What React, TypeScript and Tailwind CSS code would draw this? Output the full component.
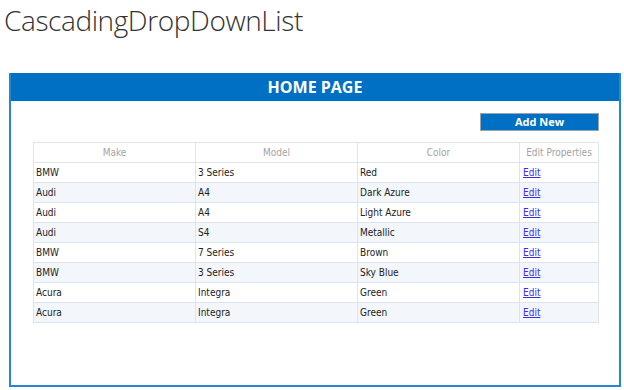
import React from "react";

const rows: [string, string, string][] = [
  ["BMW", "3 Series", "Red"],
  ["Audi", "A4", "Dark Azure"],
  ["Audi", "A4", "Light Azure"],
  ["Audi", "S4", "Metallic"],
  ["BMW", "7 Series", "Brown"],
  ["BMW", "3 Series", "Sky Blue"],
  ["Acura", "Integra", "Green"],
  ["Acura", "Integra", "Green"],
];

export default function App() {
  const cellFont = { fontFamily: '"DejaVu Sans Condensed", "Liberation Sans", sans-serif' };
  return (
    <div className="w-[624px] h-[390px] bg-white overflow-hidden relative">
      <div
        className="pl-[4px] pt-[2px] h-[73px] text-[28px] leading-[36px] tracking-[-0.4px] font-light text-[#333333]"
        style={{ fontFamily: '"Open Sans", "Noto Sans", sans-serif' }}
      >
        CascadingDropDownList
      </div>
      <div className="ml-[9px] w-[612px] h-[314px] border-2 border-[#2a84d4] border-t-0 flex flex-col">
        <div
          className="h-[28px] bg-[#0070c4] text-white font-bold text-[16px] flex items-center justify-center"
          style={{ fontFamily: '"Open Sans", "Noto Sans", sans-serif' }}
        >
          HOME PAGE
        </div>
        <div className="flex justify-end pr-[20px] pt-[12px]">
          <div
            className="w-[119px] h-[18px] bg-[#0070c4] border border-[#9aa4ae] text-white font-bold text-[11px] flex items-center justify-center"
            style={{ fontFamily: '"Open Sans", "Noto Sans", sans-serif' }}
          >
            Add New
          </div>
        </div>
        <div className="pl-[22px] pr-[20px] pt-[11px]">
          <table className="w-[566px] border-collapse text-[10px]" style={cellFont}>
            <thead>
              <tr className="h-[20px] bg-white">
                <th className="w-[162px] border border-[#dce5ef] font-normal text-[#a3a3a3] text-center">Make</th>
                <th className="w-[162px] border border-[#dce5ef] font-normal text-[#a3a3a3] text-center">Model</th>
                <th className="w-[162px] border border-[#dce5ef] font-normal text-[#a3a3a3] text-center">Color</th>
                <th className="border border-[#dce5ef] font-normal text-[#a3a3a3] text-center">Edit Properties</th>
              </tr>
            </thead>
            <tbody>
              {rows.map((r, i) => (
                <tr key={i} className={`h-[20px] ${i % 2 === 1 ? "bg-[#f3f6fa]" : "bg-white"}`}>
                  <td className="border border-[#dce5ef] pl-[2px] text-[#222222]">{r[0]}</td>
                  <td className="border border-[#dce5ef] pl-[2px] text-[#222222]">{r[1]}</td>
                  <td className="border border-[#dce5ef] pl-[2px] text-[#222222]">{r[2]}</td>
                  <td className="border border-[#dce5ef] pl-[3px]">
                    <span className="text-[#3b2cf5] underline">Edit</span>
                  </td>
                </tr>
              ))}
            </tbody>
          </table>
        </div>
      </div>
    </div>
  );
}
